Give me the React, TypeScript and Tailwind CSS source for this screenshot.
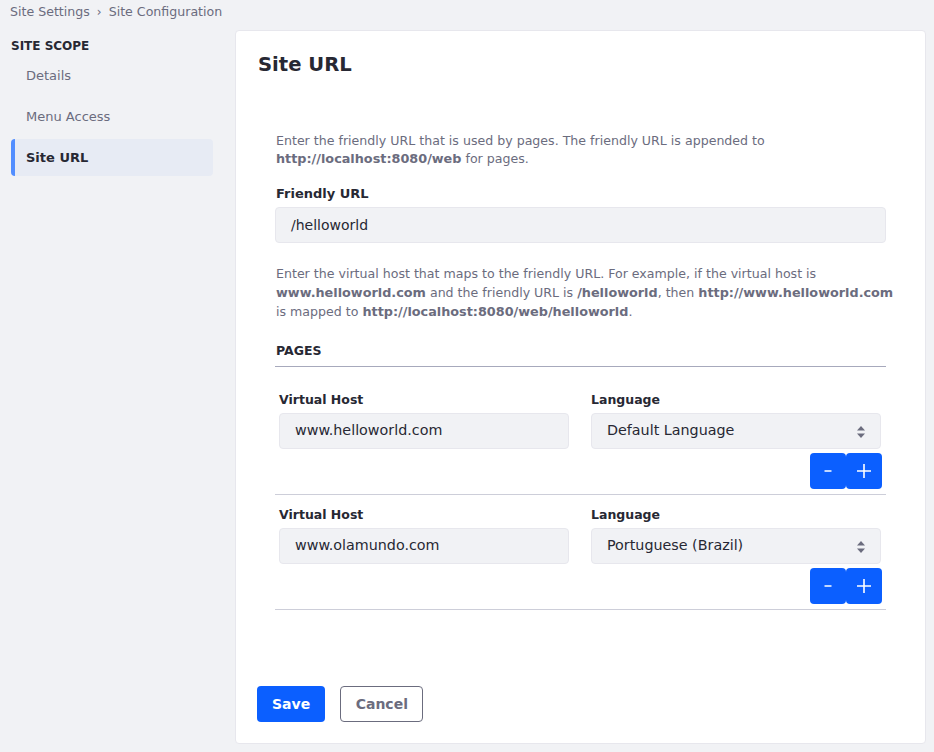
const txt = "font-['DejaVu_Sans',sans-serif]";

type Row = { host: string; lang: string; top: string };

const rows: Row[] = [
  { host: "www.helloworld.com", lang: "Default Language", top: "mt-[24px]" },
  { host: "www.olamundo.com", lang: "Portuguese (Brazil)", top: "mt-[11px]" },
];

function SelectArrows() {
  return (
    <svg width="10" height="14" viewBox="0 0 10 14" className="absolute right-[14px] top-[11px]">
      <path d="M5 1 L9 5.5 H1 Z" fill="#6b6c7e" />
      <path d="M5 13 L9 8.5 H1 Z" fill="#6b6c7e" />
    </svg>
  );
}

function VirtualHostRow({ row }: { row: Row }) {
  return (
    <div className={`${row.top} border-b border-[#cdced9]`}>
      <div className="flex gap-[22px] px-[4px]">
        <div className="w-[290px]">
          <div className="text-[12.5px] font-bold text-[#272833] leading-[18px]">Virtual Host</div>
          <div className="mt-[4px] h-[36px] rounded-[4px] border border-[#e7e7ed] bg-[#f1f2f5] px-[15px] flex items-center text-[14.3px] text-[#272833]">
            {row.host}
          </div>
        </div>
        <div className="w-[290px]">
          <div className="text-[12.5px] font-bold text-[#272833] leading-[18px]">Language</div>
          <div className="relative mt-[4px] h-[36px] rounded-[4px] border border-[#e7e7ed] bg-[#f1f2f5] px-[15px] flex items-center text-[14.3px] text-[#272833]">
            {row.lang}
            <SelectArrows />
          </div>
        </div>
      </div>
      <div className="flex justify-end px-[4px] mt-[4px] mb-[5px]">
        <button className="w-[36px] h-[36px] rounded-[4px] bg-[#0b5fff] text-white flex items-center justify-center">
          <svg width="12" height="12" viewBox="0 0 12 12">
            <path d="M2.5 6 H9.5" stroke="white" strokeWidth="1.5" />
          </svg>
        </button>
        <button className="w-[36px] h-[36px] rounded-[4px] bg-[#0b5fff] text-white flex items-center justify-center">
          <svg width="16" height="16" viewBox="0 0 16 16">
            <path d="M8 1 V15 M1 8 H15" stroke="white" strokeWidth="1.6" />
          </svg>
        </button>
      </div>
    </div>
  );
}

export default function App() {
  return (
    <div className={`min-h-[752px] bg-[#f1f2f5] ${txt} text-[#272833]`}>
      {/* breadcrumb */}
      <div className="flex items-center h-[24px] pl-[10px] text-[12.6px] text-[#6b6c7e]">
        <span>Site Settings</span>
        <span className="mx-[7px] text-[12px]">›</span>
        <span>Site Configuration</span>
      </div>

      <div className="flex pt-[6px]">
        {/* sidebar */}
        <aside className="w-[235px] shrink-0 pl-[11px] pr-[22px]">
          <div className="text-[12px] font-bold text-[#272833] pt-[9px] leading-[14px]">SITE SCOPE</div>
          <nav className="mt-[5px] flex flex-col gap-[4px]">
            <div className="h-[36px] flex items-center pl-[15px] text-[13px] text-[#6b6c7e]">Details</div>
            <div className="h-[37px] flex items-center pl-[15px] text-[13px] text-[#6b6c7e]">Menu Access</div>
            <div className="h-[37px] flex items-center pl-[11px] text-[13px] font-bold text-[#272833] bg-[#e7ebf4] border-l-4 border-[#528eff] rounded-[4px]">
              Site URL
            </div>
          </nav>
        </aside>

        {/* main card */}
        <main className="w-[691px] h-[714px] bg-white border border-[#e7e7ed] rounded-[4px] flex flex-col">
          <h1 className="pl-[22px] pt-[21px] text-[19.6px] font-bold leading-[26px] text-[#272833]">Site URL</h1>

          <div className="pl-[40px] pr-[39px] mt-[54px]">
            <p className="text-[12.6px] leading-[18px] text-[#6b6c7e] -mr-[6px]">
              Enter the friendly URL that is used by pages. The friendly URL is appended to{" "}
              <b className="text-[12.8px]">http://localhost:8080/web</b> for pages.
            </p>

            <div className="mt-[17px] text-[13px] font-bold leading-[18px] text-[#272833]">Friendly URL</div>
            <div className="-ml-[1px] mt-[4px] h-[36px] rounded-[4px] border border-[#e7e7ed] bg-[#f1f2f5] px-[15px] flex items-center text-[14px] text-[#272833]">
              /helloworld
            </div>

            <p className="mt-[21px] text-[12.6px] leading-[19px] text-[#6b6c7e] -mr-[10px]">
              Enter the virtual host that maps to the friendly URL. For example, if the virtual host is{" "}
              <b className="text-[12.8px]">www.helloworld.com</b> and the friendly URL is{" "}
              <b className="text-[12.8px]">/helloworld</b>, then <b className="text-[12.8px]">http://www.helloworld.com</b>{" "}
              is mapped to <b className="text-[12.8px]">http://localhost:8080/web/helloworld</b>.
            </p>

            <div className="-ml-[1px] mt-[21px] pb-[6px] pl-[1px] text-[12.5px] font-bold leading-[18px] text-[#272833] border-b border-[#a7a9bc]">
              PAGES
            </div>

            <div className="-ml-[1px]">
              {rows.map((r) => (
                <VirtualHostRow key={r.host} row={r} />
              ))}
            </div>
          </div>

          <div className="mt-auto mb-[21px] pl-[21px] flex gap-[15px]">
            <button className="h-[36px] px-[15px] rounded-[4px] bg-[#0b5fff] text-white text-[14px] font-bold">Save</button>
            <button className="h-[36px] px-[14.5px] rounded-[4px] border border-[#6b6c7e] text-[#6b6c7e] text-[14px] font-bold">Cancel</button>
          </div>
        </main>
      </div>
    </div>
  );
}
